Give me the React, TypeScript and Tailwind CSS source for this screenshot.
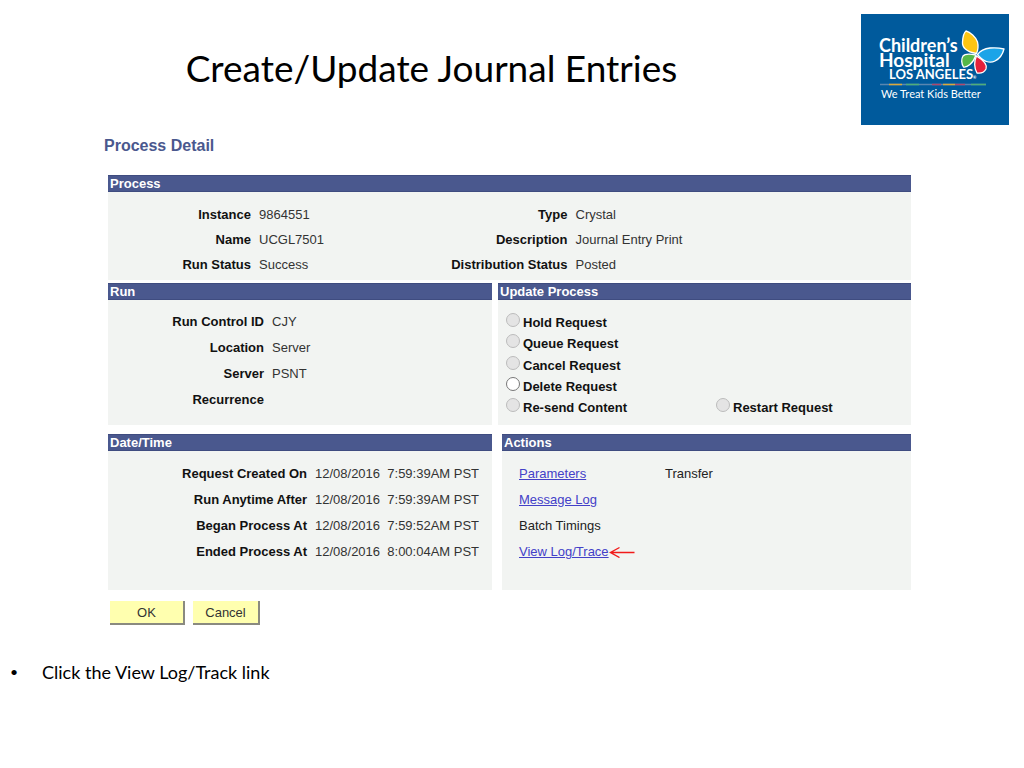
import type { ReactNode } from "react";

type Field = { label: string; value: string };

const processLeft: Field[] = [
  { label: "Instance", value: "9864551" },
  { label: "Name", value: "UCGL7501" },
  { label: "Run Status", value: "Success" },
];

const processRight: Field[] = [
  { label: "Type", value: "Crystal" },
  { label: "Description", value: "Journal Entry Print" },
  { label: "Distribution Status", value: "Posted" },
];

const run: Field[] = [
  { label: "Run Control ID", value: "CJY" },
  { label: "Location", value: "Server" },
  { label: "Server", value: "PSNT" },
  { label: "Recurrence", value: "" },
];

const dates: Field[] = [
  { label: "Request Created On", value: "12/08/2016\u00a0 7:59:39AM PST" },
  { label: "Run Anytime After", value: "12/08/2016\u00a0 7:59:39AM PST" },
  { label: "Began Process At", value: "12/08/2016\u00a0 7:59:52AM PST" },
  { label: "Ended Process At", value: "12/08/2016\u00a0 8:00:04AM PST" },
];

function Panel({ title, children }: { title: string; children: ReactNode }) {
  return (
    <section className="flex flex-col bg-[#f2f4f2]">
      <h3 className="h-[17px] border-y border-[#3f4c80] bg-[#4a588e] px-[2px] font-bold leading-[15px] text-white">
        {title}
      </h3>
      {children}
    </section>
  );
}

function Fields({ items, className }: { items: Field[]; className: string }) {
  return (
    <dl className={"grid content-start gap-x-2 whitespace-nowrap " + className}>
      {items.map((f) => (
        <div key={f.label} className="contents">
          <dt className="text-right font-bold text-[#111]">{f.label}</dt>
          <dd className="text-[#333]">{f.value}</dd>
        </div>
      ))}
    </dl>
  );
}

function Radio({ label, disabled = true }: { label: string; disabled?: boolean }) {
  return (
    <label className="flex h-[21px] items-start gap-[3px] font-bold leading-[21px] text-[#111]">
      <input
        type="radio"
        name="update"
        disabled={disabled}
        className="mt-px size-[14px] appearance-none rounded-full border border-[#777] bg-white disabled:border-[#bcbcbc] disabled:bg-[#e4e4e4]"
      />
      {label}
    </label>
  );
}

function Logo() {
  return (
    <svg viewBox="0 0 148 111" className="h-[111px] w-[148px] shrink-0" role="img" aria-label="Children's Hospital Los Angeles">
      <rect width="148" height="111" fill="#005a9c" />
      <g fill="#fff" fontFamily="Lato, sans-serif">
        <text fontSize="18" fontWeight="700">
          <tspan x="18" y="38">Children’s</tspan>
          <tspan x="18" y="53" fontSize="19">Hospital</tspan>
          <tspan x="28" y="65" fontSize="13">LOS ANGELES</tspan>
          <tspan fontSize="4">®</tspan>
        </text>
        <text x="20" y="84" fontSize="11">We Treat Kids Better</text>
      </g>
      <g stroke="#fff" strokeWidth="1.3" strokeLinejoin="round">
        <path d="M115.500 39.500C105 38 101 33 101.500 28C101.800 23 102.500 19 105 17C109 18 115 23 116.500 28C117.500 32 117 36 115.500 39.500Z" fill="#fdc513" />
        <path d="M116.500 40.500C119 37 124 34.500 129 34C134 33.500 139 34 143 35C141.500 41 138 45 134 47C129 49.500 122 48 116.500 40.500Z" fill="#1ba4e8" />
        <path d="M115 41C110 40 104 39.500 102 42C100 45 100.500 50 102.500 53C106 53.500 112 50 115 41Z" fill="#55b848" />
        <path d="M115.500 42C113 47 113 54 116 59C119 59.500 123 58.500 125 55C127 50 122 46 115.500 42Z" fill="#e5203a" />
      </g>
      <g strokeWidth="1.5">
        <path d="M19 70.500H125" stroke="#5a86b0" />
        <path d="M28 70.500H41M82 70.500H94" stroke="#d9a93c" />
        <path d="M45 70.500H58M110 70.500H125" stroke="#4fae7a" />
        <path d="M71 70.500H80M94 70.500H104" stroke="#b0486c" />
      </g>
    </svg>
  );
}

function RedArrow() {
  return (
    <svg viewBox="0 0 26 12" className="h-3 w-[26px]" fill="none" stroke="#f11a1a" strokeWidth="1.4" aria-hidden="true">
      <path d="M25.500 6.500H1.500M10.500 1.500L1.500 6.500L10.500 11.500" />
    </svg>
  );
}

const link = "text-[#4340c8] underline";
const button =
  "h-6 border-b-2 border-r-2 border-[#8a8a80] bg-[#ffffaf] pt-[2px] text-[#333] leading-5";

export default function App() {
  return (
    <main className="min-h-screen bg-white font-['Lato',sans-serif] text-black">
      <header className="flex items-start pr-[15px] pt-[14px]">
        <h1 className="flex-1 pl-[2px] pt-[30px] text-center text-[37px] leading-[48px]">Create/Update Journal Entries</h1>
        <Logo />
      </header>

      <form
        className="ml-[108px] mr-[113px] font-['Liberation_Sans',Arial,sans-serif] text-[13px]"
        onSubmit={(e) => e.preventDefault()}
      >
        <h2 className="-ml-1 pb-[19px] pt-[11px] text-[16px] font-bold leading-5 text-[#4a588e]">Process Detail</h2>

        <Panel title="Process">
          <div className="grid grid-cols-2 pb-[3px] pt-[10px] leading-[25px]">
            <Fields items={processLeft} className="grid-cols-[143px_1fr]" />
            <Fields items={processRight} className="grid-cols-[58px_1fr] [&_dt]:justify-self-end" />
          </div>
        </Panel>

        <div className="mt-[3px] grid grid-cols-[384fr_413fr] gap-x-[6px]">
          <Panel title="Run">
            <Fields items={run} className="grid-cols-[156px_1fr] pb-3 pt-[9px] leading-[26px]" />
          </Panel>
          <Panel title="Update Process">
            <div className="flex flex-1 flex-col justify-between pb-[7px] pl-2 pt-3">
              <Radio label="Hold Request" />
              <Radio label="Queue Request" />
              <Radio label="Cancel Request" />
              <Radio label="Delete Request" disabled={false} />
              <div className="grid grid-cols-[210px_1fr]">
                <Radio label="Re-send Content" />
                <Radio label="Restart Request" />
              </div>
            </div>
          </Panel>
        </div>

        <div className="mt-[9px] grid grid-cols-[384fr_409fr] gap-x-[10px]">
          <Panel title="Date/Time">
            <Fields items={dates} className="grid-cols-[199px_1fr] pb-[25px] pt-[10px] leading-[26px]" />
          </Panel>
          <Panel title="Actions">
            <ul className="grid grid-cols-[146px_1fr] pl-[17px] pt-[10px] leading-[26px] text-[#222]">
              <li><a href="#parameters" className={link}>Parameters</a></li>
              <li>Transfer</li>
              <li className="col-span-2"><a href="#messages" className={link}>Message Log</a></li>
              <li className="col-span-2">Batch Timings</li>
              <li className="col-span-2 flex items-center">
                <a href="#trace" className={link}>View Log/Trace</a>
                <RedArrow />
              </li>
            </ul>
          </Panel>
        </div>

        <div className="flex gap-2 pl-[2px] pt-[11px]">
          <button type="submit" className={button + " w-[75px]"}>OK</button>
          <button type="button" className={button + " w-[67px]"}>Cancel</button>
        </div>
      </form>

      <ul className="pt-[35px] text-[18px] leading-6">
        <li className="flex">
          <span className="w-[42px] pl-[10px] text-[14px]">•</span>
          Click the View Log/Track link
        </li>
      </ul>
    </main>
  );
}
